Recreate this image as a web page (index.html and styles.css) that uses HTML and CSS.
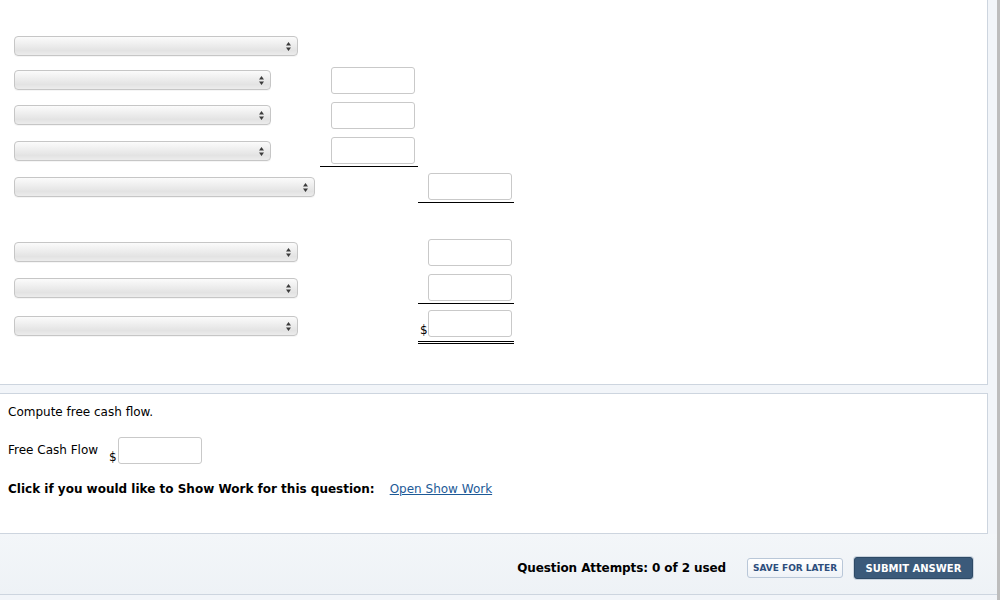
FILE: index.html
```html
<!DOCTYPE html>
<html>
<head>
<meta charset="utf-8">
<link rel="stylesheet" href="styles.css">
</head>
<body>
<div class="page">
  <div class="main">
    <section class="panel panel-work">
      <div class="row r1">
        <div class="select w284"><svg class="arr" width="5" height="9" viewBox="0 0 5 9"><path d="M0 3.6L2.5 0L5 3.6Z M0 5.4L5 5.4L2.5 9Z"/></svg></div>
      </div>
      <div class="row">
        <div class="select w257 up"><svg class="arr" width="5" height="9" viewBox="0 0 5 9"><path d="M0 3.6L2.5 0L5 3.6Z M0 5.4L5 5.4L2.5 9Z"/></svg></div>
        <div class="cell ca"><input class="box" type="text"></div>
      </div>
      <div class="row">
        <div class="select w257 up"><svg class="arr" width="5" height="9" viewBox="0 0 5 9"><path d="M0 3.6L2.5 0L5 3.6Z M0 5.4L5 5.4L2.5 9Z"/></svg></div>
        <div class="cell ca"><input class="box" type="text"></div>
      </div>
      <div class="row under-row">
        <div class="select w257"><svg class="arr" width="5" height="9" viewBox="0 0 5 9"><path d="M0 3.6L2.5 0L5 3.6Z M0 5.4L5 5.4L2.5 9Z"/></svg></div>
        <div class="cell ca under"><input class="box" type="text"></div>
      </div>
      <div class="row under-row">
        <div class="select w301"><svg class="arr" width="5" height="9" viewBox="0 0 5 9"><path d="M0 3.6L2.5 0L5 3.6Z M0 5.4L5 5.4L2.5 9Z"/></svg></div>
        <div class="cell cb under"><input class="box" type="text"></div>
      </div>
      <div class="row gap-before">
        <div class="select w284 up"><svg class="arr" width="5" height="9" viewBox="0 0 5 9"><path d="M0 3.6L2.5 0L5 3.6Z M0 5.4L5 5.4L2.5 9Z"/></svg></div>
        <div class="cell cb"><input class="box" type="text"></div>
      </div>
      <div class="row under-row">
        <div class="select w284"><svg class="arr" width="5" height="9" viewBox="0 0 5 9"><path d="M0 3.6L2.5 0L5 3.6Z M0 5.4L5 5.4L2.5 9Z"/></svg></div>
        <div class="cell cb under"><input class="box" type="text"></div>
      </div>
      <div class="row">
        <div class="select w284 low"><svg class="arr" width="5" height="9" viewBox="0 0 5 9"><path d="M0 3.6L2.5 0L5 3.6Z M0 5.4L5 5.4L2.5 9Z"/></svg></div>
        <div class="cell cb total"><span class="dollar">$</span><input class="box" type="text"></div>
      </div>
    </section>

    <section class="panel panel-q">
      <p class="prompt">Compute free cash flow.</p>
      <div class="fcf">
        <span class="fcf-label">Free Cash Flow</span>
        <span class="fcf-dollar">$</span>
        <input class="box" type="text">
      </div>
      <p class="showwork"><b>Click if you would like to Show Work for this question:</b><a class="link" href="#">Open Show Work</a></p>
    </section>

    <footer class="footer">
      <span class="attempts">Question Attempts: 0 of 2 used</span>
      <button class="btn btn-save" type="button">SAVE FOR LATER</button>
      <button class="btn btn-submit" type="button">SUBMIT ANSWER</button>
    </footer>
  </div>
  <div class="edge"></div>
</div>
</body>
</html>
```

FILE: styles.css
```css
html, body {
  margin: 0;
  padding: 0;
  background: #ffffff;
}
body {
  width: 1002px;
  height: 600px;
  overflow: hidden;
  font-family: "DejaVu Sans", Verdana, sans-serif;
  font-size: 12px;
  color: #000;
}
.page {
  display: flex;
  height: 600px;
}
.main {
  width: 997px;
  background: #f2f5f9;
  display: flex;
  flex-direction: column;
}
.edge {
  width: 3px;
  background: #bdbdbd;
}

.panel {
  box-sizing: border-box;
  width: 988px;
  background: #fff;
  border-right: 1px solid #cdd5df;
  border-bottom: 1px solid #cdd5df;
}
.panel-work {
  height: 385px;
  padding-top: 28px;
}
.row {
  display: grid;
  grid-template-columns: 320px 98px 96px;
  min-height: 35px;
}
.under-row { margin-bottom: 1px; }
.gap-before { margin-top: 31px; }

.select {
  box-sizing: border-box;
  margin-left: 14px;
  margin-top: 8px;
  height: 20px;
  align-self: start;
  border: 1px solid #c6c6c6;
  border-radius: 4px;
  background: linear-gradient(#fbfbfb 0%, #f0f0f0 35%, #e3e3e3 75%, #ececec 100%);
  box-shadow: 0 1px 0 rgba(0,0,0,0.04);
  display: flex;
  align-items: center;
  justify-content: flex-end;
  padding-right: 6px;
}
.select.up { margin-top: 7px; }
.select.low { margin-top: 10px; }
.w284 { width: 284px; }
.w257 { width: 257px; }
.w301 { width: 301px; }
.arr { fill: #3c3c3c; display: block; }

.cell {
  grid-row: 1;
  align-self: start;
  padding-top: 4px;
  display: flex;
  align-items: flex-end;
}
.ca { grid-column: 2; padding-left: 11px; }
.cb { grid-column: 3; padding-left: 10px; }
.under {
  padding-bottom: 2px;
  border-bottom: 1px solid #000;
}
.total {
  padding-left: 0;
  padding-bottom: 4px;
  border-bottom: 3px double #000;
}
.dollar {
  width: 8px;
  margin-left: 2px;
  font-size: 12px;
  line-height: 12px;
  margin-bottom: 1px;
}

.box {
  box-sizing: border-box;
  width: 84px;
  height: 27px;
  margin: 0;
  border: 1px solid #c9c9c9;
  border-radius: 3px;
  background: #fff;
  padding: 0;
  font: inherit;
}

.panel-q {
  margin-top: 8px;
  height: 141px;
  border-top: 1px solid #cdd5df;
  padding: 10px 8px 0 8px;
}
.prompt {
  margin: 0;
  line-height: 16px;
}
.fcf {
  margin-top: 17px;
  display: flex;
  align-items: center;
  height: 27px;
}
.fcf-label { line-height: 16px; margin-top: -2px; }
.fcf-dollar {
  align-self: flex-end;
  margin-left: 11px;
  width: 9px;
  line-height: 12px;
  margin-bottom: 1px;
}
.showwork {
  margin: 17px 0 0 0;
  line-height: 16px;
}
.link {
  margin-left: 15px;
  color: #1d5a97;
  text-decoration: underline;
}

.footer {
  box-sizing: border-box;
  height: 61px;
  padding: 8px 24px 0 0;
  border-bottom: 1px solid #cdd5df;
  display: flex;
  align-items: center;
  justify-content: flex-end;
  background: linear-gradient(#f3f6f9, #eef2f6);
}
.attempts {
  font-weight: bold;
  font-size: 12px;
  letter-spacing: -0.1px;
  margin-right: 21px;
}
.btn {
  box-sizing: border-box;
  font-family: "DejaVu Sans", Verdana, sans-serif;
  font-weight: bold;
  border-radius: 3px;
  padding: 0;
  cursor: pointer;
}
.btn-save {
  width: 96px;
  height: 20px;
  font-size: 9px;
  color: #2d4d7c;
  background: linear-gradient(#ffffff, #eef2f7);
  border: 1px solid #b9c7d8;
  margin-right: 11px;
}
.btn-submit {
  width: 119px;
  height: 22px;
  font-size: 10px;
  color: #fff;
  background: #3b5a7a;
  border: 1px solid #2e4a66;
  box-shadow: 0 0 0 1px #c9d3de;
}
```
